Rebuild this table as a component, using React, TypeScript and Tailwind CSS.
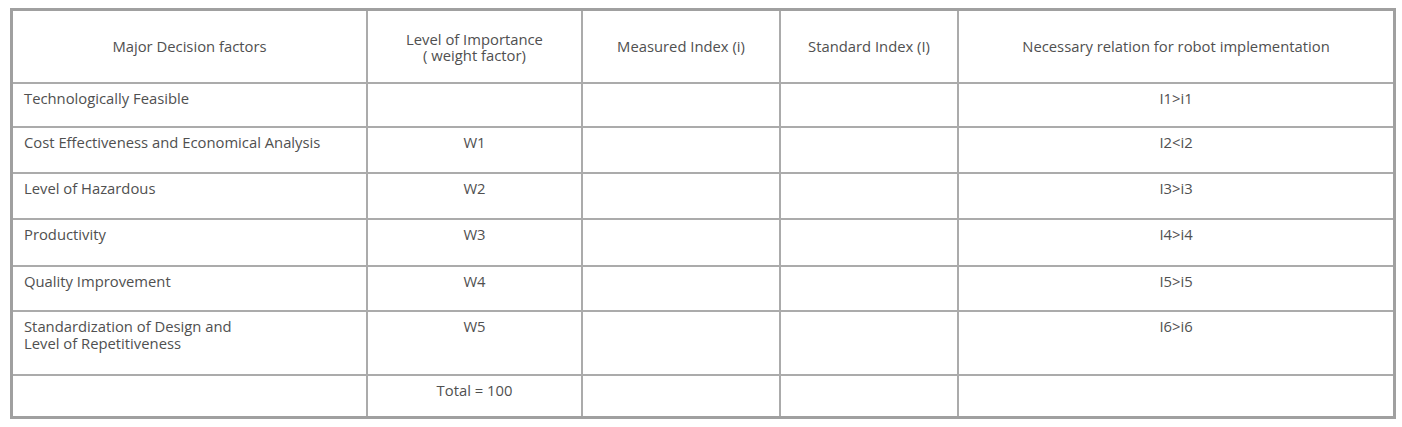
import React from "react";

const rows: { a: React.ReactNode; b: string; e: string; h: string }[] = [
  { a: "Technologically Feasible", b: "", e: "I1>i1", h: "h-[42px]" },
  { a: "Cost Effectiveness and Economical Analysis", b: "W1", e: "I2<i2", h: "h-[44px]" },
  { a: "Level of Hazardous", b: "W2", e: "I3>i3", h: "h-[44px]" },
  { a: "Productivity", b: "W3", e: "I4>i4", h: "h-[45px]" },
  { a: "Quality Improvement", b: "W4", e: "I5>i5", h: "h-[43px]" },
  {
    a: (
      <>
        Standardization of Design and
        <br />
        Level of Repetitiveness
      </>
    ),
    b: "W5",
    e: "I6>i6",
    h: "h-[62px]",
  },
  { a: "", b: "Total = 100", e: "", h: "h-[40px]" },
];

export default function App() {
  return (
    <div className="w-[1402px] h-[427px] bg-white pt-[8px] pl-[10px]" style={{ fontFamily: '"Open Sans", "Noto Sans", sans-serif' }}>
      <div className="w-[1386px] h-[411px] border-[3px] border-[#a0a0a0] bg-[#ababab]">
        <div className="grid grid-cols-[353px_213px_196px_176px_434px] gap-[2px] text-[14.8px] leading-[17px] font-normal text-[#505050]">
          <div className="h-[71px] bg-white flex items-center justify-center text-center">Major Decision factors</div>
          <div className="h-[71px] bg-white flex items-center justify-center text-center leading-[16px]">
            Level of Importance
            <br />( weight factor)
          </div>
          <div className="h-[71px] bg-white flex items-center justify-center text-center">Measured Index (i)</div>
          <div className="h-[71px] bg-white flex items-center justify-center text-center">Standard Index (I)</div>
          <div className="h-[71px] bg-white flex items-center justify-center text-center">Necessary relation for robot implementation</div>
          {rows.map((r, i) => (
            <React.Fragment key={i}>
              <div className={`${r.h} bg-white pl-[11px] pt-[6px]`}>{r.a}</div>
              <div className={`${r.h} bg-white text-center pt-[6px]`}>{r.b}</div>
              <div className={`${r.h} bg-white`}></div>
              <div className={`${r.h} bg-white`}></div>
              <div className={`${r.h} bg-white text-center pt-[6px]`}>{r.e}</div>
            </React.Fragment>
          ))}
        </div>
      </div>
    </div>
  );
}
